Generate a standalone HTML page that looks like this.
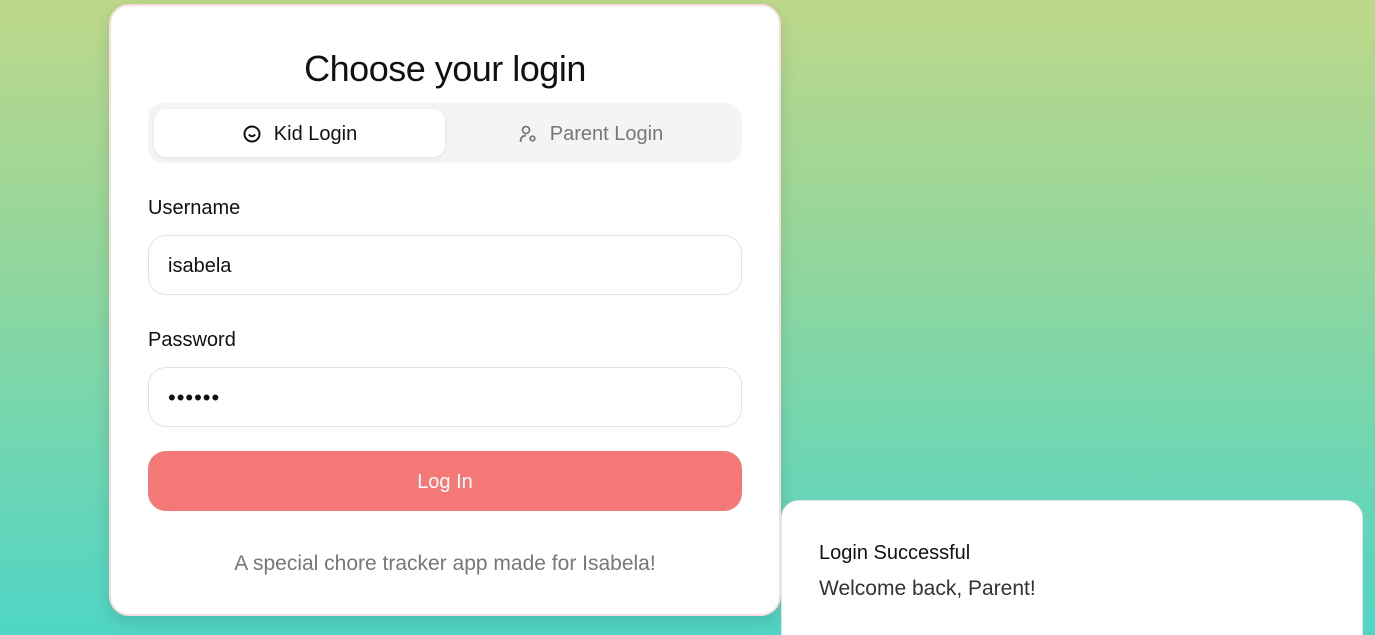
<!DOCTYPE html>
<html style="width:1375px;height:635px;overflow:hidden;background:#4fd5c6"><head><meta charset="utf-8"><style>
*{box-sizing:border-box;margin:0;padding:0}
body{width:1375px;height:635px;overflow:hidden;position:relative;font-family:"Liberation Sans",sans-serif;background:linear-gradient(180deg,#bdd88a 0%,#93d69c 40%,#4fd5c6 100%)}
.card{position:absolute;left:109px;top:4px;width:672px;height:612px;background:#fff;border:2px solid #f6dede;border-radius:20px;box-shadow:0 6px 16px rgba(0,0,0,.12)}
h1{position:absolute;top:42px;left:0;width:100%;text-align:center;font-size:36px;font-weight:normal;color:#111;letter-spacing:-0.5px}
.tabs{position:absolute;left:37px;top:97px;width:594px;height:60px;background:#f4f4f3;border-radius:16px}
.tab{position:absolute;top:6px;height:48px;width:291px;border-radius:12px;display:flex;align-items:center;justify-content:center;font-size:20px;gap:12px;padding-top:2px}
.t1{left:6px;background:#fff;color:#111;box-shadow:0 1px 4px rgba(0,0,0,.08)}
.t2{left:297px;color:#777}
.lbl{position:absolute;left:37px;font-size:20px;color:#111}
.inp{position:absolute;left:37px;width:594px;height:60px;border:1px solid #e3e3e3;border-radius:18px;padding-left:19px;padding-top:2px;display:flex;align-items:center;font-size:20px;color:#111}
.btn{position:absolute;left:37px;top:445px;width:594px;height:60px;background:#f37876;border-radius:18px;color:#fff;font-size:20px;display:flex;align-items:center;justify-content:center;padding-top:2px}
.foot{position:absolute;top:546px;width:100%;text-align:center;font-size:21px;color:#777}
.toast{position:absolute;left:781px;top:500px;width:582px;height:160px;background:#fff;border:1px solid #e5e5e5;border-radius:18px}
</style></head><body>
<div class="card">
<h1>Choose your login</h1>
<div class="tabs">
<div class="tab t1"><svg width="20" height="20" viewBox="0 0 20 20" fill="none" stroke="#111" stroke-width="2"><circle cx="10" cy="10" r="7.5"/><path d="M6.8 10.5q3.2 3.5 6.4 0"/></svg>Kid Login</div>
<div class="tab t2"><svg width="20" height="20" viewBox="0 0 20 20" fill="none" stroke="#777" stroke-width="1.7"><circle cx="8" cy="6" r="3.5"/><path d="M2.5 18q0-6 5.5-6.5"/><circle cx="14.5" cy="14.5" r="2.3"/></svg>Parent Login</div>
</div>
<div class="lbl" style="top:191px">Username</div>
<div class="inp" style="top:229px">isabela</div>
<div class="lbl" style="top:323px">Password</div>
<div class="inp" style="top:361px;font-size:22px;letter-spacing:1px">••••••</div>
<div class="btn">Log In</div>
<div class="foot">A special chore tracker app made for Isabela!</div>
</div>
<div class="toast">
<div style="position:absolute;left:37px;top:41px;font-size:20px;color:#111">Login Successful</div>
<div style="position:absolute;left:37px;top:76px;font-size:21px;color:#333">Welcome back, Parent!</div>
</div>
</body></html>
